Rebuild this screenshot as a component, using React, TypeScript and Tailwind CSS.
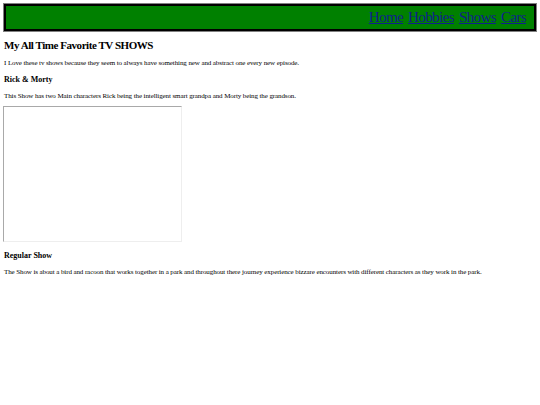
import React from 'react';

const links = ['Home', 'Hobbies', 'Shows', 'Cars'];

export default function App() {
  return (
    <div className="w-[540px] h-[405px] bg-white text-black font-['Liberation_Serif',serif] pt-[3px] px-[3px]">
      {/* Top nav bar */}
      <nav className="h-[29px] bg-[#008000] border-[3px] border-black outline outline-1 outline-[#808080] -outline-offset-1 flex items-center justify-end pr-[8px] gap-[5px]">
        {links.map((l) => (
          <a key={l} href="#" className="text-[15px] leading-none tracking-[-0.6px] text-[#10208c] underline">
            {l}
          </a>
        ))}
      </nav>

      <div className="px-[1px]">
        <h1 className="text-[11px] font-bold leading-none tracking-[-0.45px] mt-[8px]">My All Time Favorite TV SHOWS</h1>
        <p className="text-[7px] leading-none tracking-[-0.1px] mt-[9px]">
          I Love these tv shows because they seem to always have something new and abstract one every new episode.
        </p>

        <h2 className="text-[8px] font-bold leading-none mt-[9px]">Rick &amp; Morty</h2>
        <p className="text-[7px] leading-none tracking-[-0.1px] mt-[9px]">
          This Show has two Main characters Rick being the intelligent smart grandpa and Morty being the grandson.
        </p>
      </div>

      {/* Embedded video frame */}
      <div className="w-[179px] h-[136px] mt-[6px] border border-t-[#a9a9a9] border-l-[#a9a9a9] border-r-[#eeeeee] border-b-[#eeeeee] bg-white" />

      <div className="px-[1px]">
        <h2 className="text-[8px] font-bold leading-none mt-[10px]">Regular Show</h2>
        <p className="text-[7px] leading-none tracking-[-0.1px] mt-[9px]">
          The Show is about a bird and racoon that works together in a park and throughout there journey experience bizzare encounters with different characters as they work in the park.
        </p>
      </div>
    </div>
  );
}
